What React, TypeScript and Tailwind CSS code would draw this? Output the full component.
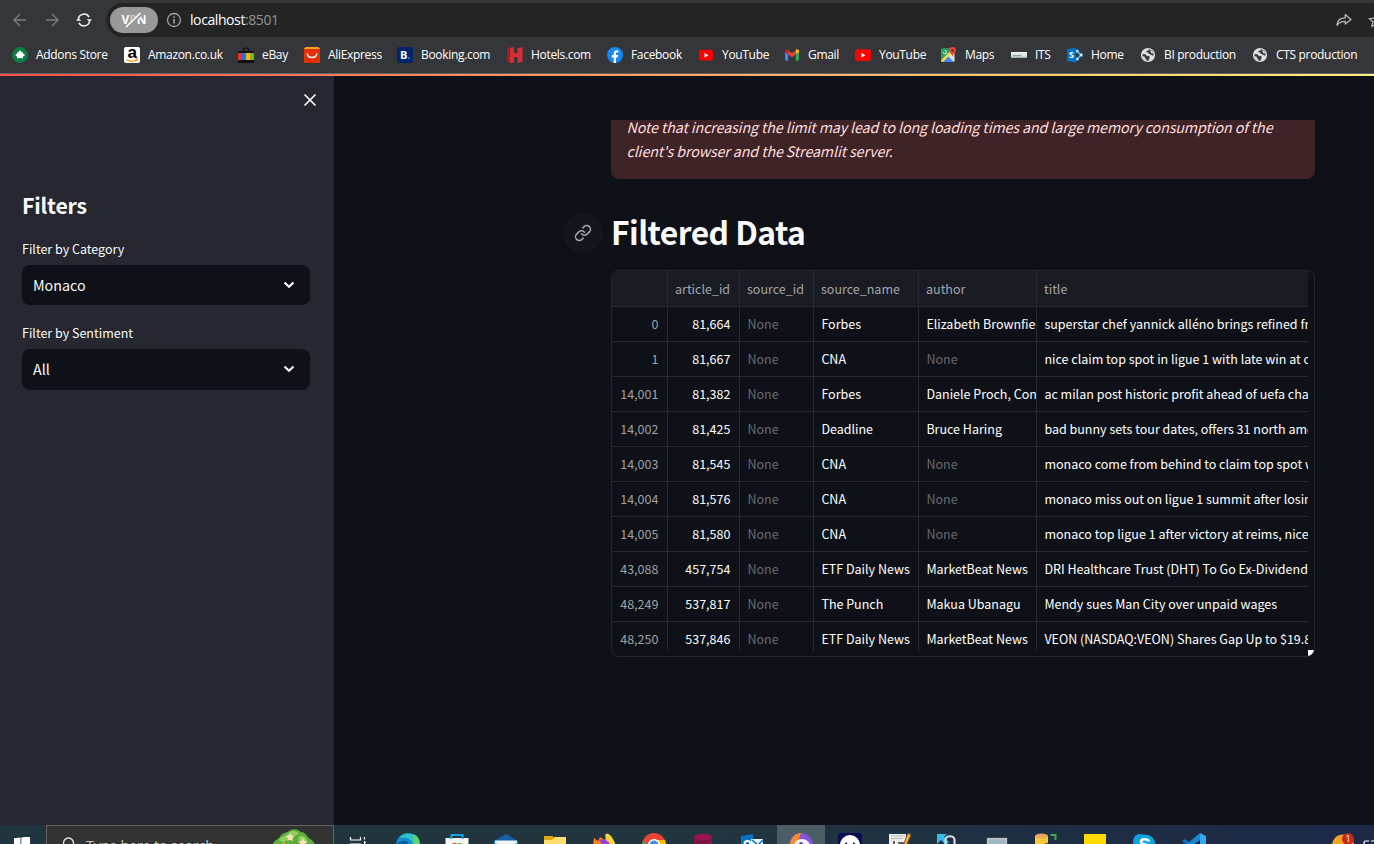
import React from "react";

const ui = "font-['Open_Sans','Noto_Sans',sans-serif]";

type Mark = { label: string; width: string; icon: React.ReactNode };

const Svg = ({ children, className = "h-4 w-4", box = "0 0 16 16" }: { children: React.ReactNode; className?: string; box?: string }) => (
  <svg viewBox={box} className={`${className} shrink-0`} fill="none">{children}</svg>
);

const Addons = () => (
  <Svg>
    <circle cx="8" cy="8" r="7.900" fill="#0b7d45" />
    <path d="M5.300 5.300h1.500a1.300 1.300 0 1 1 2.400 0h1.700v1.600a1.200 1.200 0 1 1 0 2.200v2.200H9a1.100 1.100 0 0 0-2 0H5.100V9.200a1.200 1.200 0 1 1 .2-2.300z" fill="#fff" />
  </Svg>
);
const Amazon = () => (
  <span className="relative flex h-4 w-4 shrink-0 items-center justify-center rounded-[2px] bg-white">
    <span className="-mt-[6px] font-['Liberation_Sans',sans-serif] text-[17px] font-bold leading-none text-black">a</span>
    <svg viewBox="0 0 16 16" className="absolute inset-0 h-4 w-4" fill="none"><path d="M2.500 12.400c3.400 2.500 7.400 2.300 10.600.3M11.600 12.200l2-.3-.5 1.800" stroke="#f90" strokeWidth="1.200" /></svg>
  </span>
);
const Ebay = () => (
  <Svg>
    <path d="M5.200 5V3.300C5.200 1.800 6.300 1 8 1s2.800.8 2.800 2.300V5" stroke="#111" strokeWidth="1.200" />
    <path d="M0 4h16v12H0z" fill="#15100d" />
    <path d="M0 6h4v7H0z" fill="#f02d32" /><path d="M4 6h4v7H4z" fill="#1875e5" />
    <path d="M8 6h4v7H8z" fill="#f8b60f" /><path d="M12 6h4v7h-4z" fill="#83b81a" />
  </Svg>
);
const Ali = () => (
  <Svg>
    <rect width="16" height="16" rx="2.500" fill="#f9a01b" />
    <path d="M0 2h16v11.500a2.500 2.500 0 0 1-2.500 2.500h-11A2.500 2.500 0 0 1 0 13.500z" fill="#e62e04" />
    <path d="M3.300 7c.9 4.700 8.500 4.700 9.400 0" stroke="#fff" strokeWidth="1.400" strokeLinecap="round" />
  </Svg>
);
const Booking = () => (
  <span className={`${ui} flex h-4 w-4 shrink-0 items-center justify-center rounded-[3px] bg-[#00246b] pb-px text-[11px] font-bold leading-none text-white`}>
    B<span className="text-[#22a7f0]">.</span>
  </span>
);
const Hotels = () => (
  <Svg>
    <path d="M0 1.500 4 0v5.500h4v5H4V16l-4-1.500z" fill="#9d2025" />
    <path d="M3 1 7 0v6h3.500V1.200L15.500 0v14.800L10.500 16v-6H7v5.500L3 16z" fill="#d32f35" />
  </Svg>
);
const Facebook = () => (
  <Svg>
    <circle cx="8" cy="8" r="8" fill="#1388f6" />
    <path d="M6.700 15.900v-5.500H4.800V8h1.900V6.500c0-2.300 1.200-3.300 3-3.300.7 0 1.300.1 1.600.2v2h-1c-1.100 0-1.300.6-1.300 1.400V8h2.200l-.4 2.400H9v5.500z" fill="#fff" />
  </Svg>
);
const YouTube = ({ compact = false }: { compact?: boolean }) => (
  <Svg>
    {compact ? <rect x="1" y="2.700" width="14" height="10.800" rx="2.600" fill="#f00" /> : <rect y="2.300" width="16" height="11.700" rx="2.800" fill="#f00" />}
    <path d="m6.500 6 3.900 2.200-3.900 2.300z" fill="#fff" />
  </Svg>
);
const Gmail = () => (
  <Svg>
    <path d="M1 4v8.800c0 .6.400 1 1 1h2.200V6.500z" fill="#4285f4" />
    <path d="M15 4v8.800c0 .6-.4 1-1 1h-2.200V6.500z" fill="#34a853" />
    <path d="M4.200 3.300 8 6.300l3.800-3v4L8 10.200 4.200 7.300z" fill="#ea4335" />
    <path d="M1 4c0-1.600 1.800-2.300 3-1.300l.2.200v4.400L1 5z" fill="#c5221f" />
    <path d="M15 4c0-1.600-1.800-2.300-3-1.300l-.2.200v4.400L15 5z" fill="#fbbc04" />
  </Svg>
);
const Maps = () => (
  <Svg>
    <rect x=".5" y="1.800" width="13" height="13.200" rx="1" fill="#dfe3e8" />
    <path d="M.5 1.800h11L.5 13z" fill="#1ea15b" /><path d="m1.500 15 5.700-5.700L13 15z" fill="#4285f4" />
    <path d="M.5 13 9 4.500l1.500 1.800L2 15H.5z" fill="#fdd23c" />
    <path d="M2.300 5.200a1.600 1.600 0 1 0 1.600-1.600" stroke="#fff" strokeWidth=".9" />
    <path d="M11.500 0a3.300 3.300 0 0 0-3.300 3.500c0 2.500 3 3.500 3.300 6.500.3-3 3.300-4 3.300-6.500A3.300 3.300 0 0 0 11.500 0Z" fill="#e8453c" />
    <circle cx="11.500" cy="3.500" r="1.200" fill="#7c1d19" />
  </Svg>
);
const Its = () => (
  <Svg>
    <path d="M0 5h16v6H0z" fill="#dde5e5" />
    <path d="M0 9.700h16V11H0z" fill="#9fb3b5" /><path d="M2 8.700h9" stroke="#6b8990" strokeWidth="1.200" strokeDasharray="1.500 .7" />
    <path d="M0 5.500h16" stroke="#f5f7f7" />
  </Svg>
);
const SharePoint = () => (
  <span className="relative flex h-4 w-4 shrink-0">
    <Svg>
      <path d="m9.500 3.800 4.700 4.300-4.700 4.200" stroke="#dcebf7" strokeWidth="1.200" />
      <g fill="#dcebf7" stroke="#0072c6" strokeWidth=".7"><circle cx="10.300" cy="4.200" r="1.700" /><circle cx="14" cy="8" r="1.900" /><circle cx="10.300" cy="12" r="1.700" /></g>
      <path d="M0 2 9 .5v15.200L0 14z" fill="#0072c6" />
    </Svg>
    <span className={`${ui} absolute left-[2px] top-[3px] text-[9px] font-bold leading-[10px] text-white`}>S</span>
  </span>
);
const Globe = () => (
  <Svg>
    <circle cx="8" cy="8" r="7.100" fill="#dedfe1" />
    <path d="M2.400 7.200h2.700c1 0 1.300 1.800 2.500 1.800 1.600 0 2.600.6 1.900 2.200-.5 1-.9 1.300-1 2.500-3.400.2-6.200-2.500-6.100-6.500z" fill="#393a3e" />
    <path d="M8.600 2.300c.6 1-.7 1.500-1.600 1.700-1.200.3-.7 1.400.4 1.500 1.500.1 1 1.700 2.400 1.700 1.100 0 1.500.8 2.400 1.200.6.300 1.200 0 1.400-.5.200-3-2-5.500-5-5.600z" fill="#393a3e" />
    <path d="M2.600 9.300c1.500 0 2 .2 2.300 1.300.4 1.500 1.300 1.200 1.800 3.100-2-.3-3.800-2.200-4.100-4.400zM10.300 2.900c1.600.7 2.800 2 3.200 3.600-1.500.3-2.300-.1-2.600-1.200-.3-.9-1-1.300-.6-2.400z" fill="#dedfe1" />
  </Svg>
);

const marks: Mark[] = [
  { label: "Addons Store", width: "w-[112px]", icon: <Addons /> },
  { label: "Amazon.co.uk", width: "w-[114px]", icon: <Amazon /> },
  { label: "eBay", width: "w-[66px]", icon: <Ebay /> },
  { label: "AliExpress", width: "w-[93px]", icon: <Ali /> },
  { label: "Booking.com", width: "w-[110px]", icon: <Booking /> },
  { label: "Hotels.com", width: "w-[100px]", icon: <Hotels /> },
  { label: "Facebook", width: "w-[91px]", icon: <Facebook /> },
  { label: "YouTube", width: "w-[86px]", icon: <YouTube compact /> },
  { label: "Gmail", width: "w-[71px]", icon: <Gmail /> },
  { label: "YouTube", width: "w-[86px]", icon: <YouTube /> },
  { label: "Maps", width: "w-[70px]", icon: <Maps /> },
  { label: "ITS", width: "w-[56px]", icon: <Its /> },
  { label: "Home", width: "w-[73px]", icon: <SharePoint /> },
  { label: "BI production", width: "w-[112px]", icon: <Globe /> },
  { label: "CTS production", width: "w-[114px]", icon: <Globe /> },
];

const Browser = () => (
  <header className={`${ui} flex h-[76px] shrink-0 flex-col bg-[#35363a]`}>
    <div className="flex h-[37px] pt-[3px]">
      <div className="flex w-[106px] items-center gap-4 pl-3">
        <Svg><path d="M14 8H2M8 2 2 8l6 6" stroke="#7b7c7f" strokeWidth="1.400" /></Svg>
        <Svg><path d="M2 8h12M8 2l6 6-6 6" stroke="#7b7c7f" strokeWidth="1.400" /></Svg>
        <Svg>
          <path d="M2.300 7a5.800 5.800 0 0 1 10.800-1.900M13.700 9A5.800 5.800 0 0 1 2.900 10.900" stroke="#f1f1f1" strokeWidth="1.500" />
          <path d="M10.600 7.300h5.400L13.500 10zM0 8.700h5.400L2.500 6z" fill="#f1f1f1" />
        </Svg>
      </div>
      <div className="flex flex-1 items-center overflow-hidden rounded-l-[17px] bg-[#242424] pl-1">
        <span className="relative flex h-[26px] w-12 items-center justify-center rounded-full bg-[#999] text-[12px] font-bold text-white">
          V<span className="text-[#c4c4c4]">P</span>N
          <svg viewBox="0 0 48 26" className="absolute inset-0 h-[26px] w-12" fill="none"><path d="M17.300 20.300 31.300 6.800" stroke="#999" strokeWidth="3.400" /><path d="M16 20 30.500 6" stroke="#fff" strokeWidth="1.700" /></svg>
        </span>
        <Svg className="ml-2 h-4 w-4"><circle cx="8" cy="8" r="6.500" stroke="#a0a1a3" strokeWidth="1.300" /><path d="M8 7v4.500M8 4.300v1.500" stroke="#a0a1a3" strokeWidth="1.600" /></Svg>
        <span className="ml-2 text-[14px] leading-5 tracking-[-0.41px] text-white">localhost<span className="text-[#939393]">:8501</span></span>
        <Svg className="ml-auto h-4 w-4"><path d="M1 13.300C1.200 8.800 4 5.900 9.300 5.800V2.500L15 7.400l-5.700 4.700V9.300C5.600 9.200 3 10.500 1 13.300Z" stroke="#b8b8b8" strokeWidth="1.300" strokeLinejoin="round" /></Svg>
        <Svg className="-mr-[10px] ml-4 h-4 w-4"><path d="m8 2 1.900 4.200 4.600.5-3.400 3.100.9 4.500L8 12l-4 2.300.9-4.500-3.400-3.100 4.600-.5z" stroke="#b8b8b8" strokeWidth="1.300" /></Svg>
      </div>
    </div>
    <nav className="flex h-9 items-center overflow-hidden pl-3">
      {marks.map((m, i) => (
        <a key={i} className={`flex shrink-0 items-center gap-2 whitespace-nowrap text-[12px] leading-4 tracking-[-0.32px] text-white ${m.width}`}>
          {m.icon}<span>{m.label}</span>
        </a>
      ))}
    </nav>
    <div className="h-px bg-[#626367]" />
    <div className="h-[2px] bg-linear-to-r from-[#ff4b4b] to-[#fffd80] to-[110%]" />
  </header>
);

const Select = ({ label, value, box }: { label: string; value: string; box: string }) => (
  <div>
    <div className="mb-[6px] h-[20px] text-[12.500px] leading-[20px] text-[#fafafa]">{label}</div>
    <div className={`flex items-start justify-between rounded-lg bg-[#0e1117] pl-[11px] pr-[13px] pt-[8px] text-[14.300px] leading-6 text-[#fafafa] ${box}`}>
      {value}
      <svg viewBox="0 0 16 16" className="mt-[4px] h-4 w-4" fill="none"><path d="m3.500 5.500 4.500 4.300 4.500-4.300" stroke="#fafafa" strokeWidth="2.100" /></svg>
    </div>
  </div>
);

const rows: [string, string, string, string | null, string][] = [
  ["0", "81,664", "Forbes", "Elizabeth Brownfiel", "superstar chef yannick alléno brings refined fre"],
  ["1", "81,667", "CNA", null, "nice claim top spot in ligue 1 with late win at cl"],
  ["14,001", "81,382", "Forbes", "Daniele Proch, Cont", "ac milan post historic profit ahead of uefa cham"],
  ["14,002", "81,425", "Deadline", "Bruce Haring", "bad bunny sets tour dates, offers 31 north ame"],
  ["14,003", "81,545", "CNA", null, "monaco come from behind to claim top spot wi"],
  ["14,004", "81,576", "CNA", null, "monaco miss out on ligue 1 summit after losing"],
  ["14,005", "81,580", "CNA", null, "monaco top ligue 1 after victory at reims, nice"],
  ["43,088", "457,754", "ETF Daily News", "MarketBeat News", "DRI Healthcare Trust (DHT) To Go Ex-Dividend"],
  ["48,249", "537,817", "The Punch", "Makua Ubanagu", "Mendy sues Man City over unpaid wages"],
  ["48,250", "537,846", "ETF Daily News", "MarketBeat News", "VEON (NASDAQ:VEON) Shares Gap Up to $19.88"],
];

const cols = "grid grid-cols-[56px_72px_74px_105px_118px_272px]";
const cell = "overflow-hidden whitespace-nowrap border-r border-b border-[#272a31]";

const Table = () => (
  <div className="relative h-[387px] w-[704px] overflow-hidden rounded-lg border border-[#24272e] text-[12.500px]">
    <div className="h-[380px] w-[696px] overflow-hidden">
      <div className={`${cols} h-[36px] bg-[#1a1c24] leading-[36px] text-[#a3a5aa]`}>
        {["", "article_id", "source_id", "source_name", "author", "title"].map((h) => <div key={h} className={`${cell} px-[7px]`}>{h}</div>)}
      </div>
      {rows.map((r) => (
        <div key={r[0]} className={`${cols} h-[35px] leading-[34px] text-white`}>
          <div className={`${cell} pr-[8.600px] text-right text-[#9fa1a6]`}>{r[0]}</div>
          <div className={`${cell} pr-[8.600px] text-right`}>{r[1]}</div>
          <div className={`${cell} pl-[7.400px] text-[#686a70]`}>None</div>
          <div className={`${cell} pl-[7.400px]`}>{r[2]}</div>
          <div className={`${cell} pl-[7.400px] ${r[3] ? "" : "text-[#686a70]"}`}>{r[3] ?? "None"}</div>
          <div className={`${cell} pl-[7.400px]`}>{r[4]}</div>
        </div>
      ))}
    </div>
    <svg viewBox="0 0 6 6" className="absolute bottom-0 right-0 h-[6px] w-[6px]"><path d="M0 0h6c0 4-2 6-6 6z" fill="#fff" /></svg>
  </div>
);

const Tile = ({ children, active = false }: { children?: React.ReactNode; active?: boolean }) => (
  <div className={`flex h-full w-12 shrink-0 justify-center pt-2 ${active ? "bg-[#4c5d65]" : ""}`}>
    <svg viewBox="0 0 24 24" className="h-6 w-6 shrink-0" fill="none">{children}</svg>
  </div>
);

const Taskbar = () => (
  <footer className="flex h-[19px] shrink-0 overflow-hidden bg-linear-to-r from-[#20353e] via-[#22353f] to-[#1c2846]">
    <div className="flex w-[46px] shrink-0 justify-center pt-3">
      <svg viewBox="0 0 16 16" className="mr-[2px] h-4 w-4 shrink-0" fill="#fff"><path d="M0 1.200 6.500.5v7H0zM7.300.4 16-.5v8H7.300zM0 8.500h6.500V15L0 14zM7.300 8.500H16V16l-8.700-1z" /></svg>
    </div>
    <div className={`${ui} flex h-10 w-[288px] shrink-0 border border-[#626262] bg-[#333] pl-4 text-[#c8c8c8]`}>
      <svg viewBox="0 0 16 16" className="mt-[11px] h-4 w-4" fill="none"><circle cx="5.500" cy="6" r="5" stroke="#e8e8e8" strokeWidth="1.300" /><path d="m3 10-3 4" stroke="#e8e8e8" /></svg>
      <span className="ml-[7px] mt-[9px] whitespace-nowrap text-[14.500px] leading-[22px] tracking-[-0.300px]">Type here to search</span>
      <svg viewBox="0 0 46 36" className="ml-auto mr-[16px] mt-[2px] h-9 w-[46px] shrink-0" fill="none">
        <path d="M1 18C2 13 6 12 9 9c2-5 7-4 9-6 4-3 9-2 12 1 5 0 6 5 9 7 3 1 5 5 6 8z" fill="#5fae3d" />
        <path d="M8 12c3-5 8-3 10-7 4-4 9-1 10 1-5 1-6 5-11 5-3 3-6 4-9 1zM27 10c4-4 8-1 9 3-3 2-7 2-9-3z" fill="#94cf5c" />
        <path d="m19 5 1.400 2.600 2.900.3-2 2.100.6 3-3-1.300-2.700 1.300.6-3-2.300-2.200 3.100-.3zM32 10l1.400 3 3.300.3-2.300 2.500.6 3.200h-6l.5-3.200-2.500-2.500 3.500-.3z" fill="#fbe0be" />
        <path d="m3 17 3-2 2 3zM13 13l3 5h-6z" fill="#e0aa3b" />
      </svg>
    </div>
    <div className="ml-[1px] flex gap-[1.100px]">
      <Tile><path d="M3.500 4v3.500M3.500 7h10M13.500 4v3.500M3.500 15v-4h10v4M17.500 4v2.500M17.500 8v10M17 9.500h2" stroke="#fff" strokeWidth="1.200" /></Tile>
      <Tile><circle cx="12" cy="12" r="12" fill="#178bcf" /><path d="M3 5C9-3 23 0 24 11c-4 3-8 1-8-2-2-4-8-5-13-4z" fill="#2fbfc7" /><path d="M17 1c6 2 8 8 6 14l-5-5z" fill="#5bd56b" /><path d="M0 12c4-6 14-5 12 0z" fill="#0c5ea7" /></Tile>
      <Tile><path d="M.5 5h23v17H.5z" fill="#f5f5f5" /><path d="M6.500 6V2h11v4" stroke="#13a5e9" strokeWidth="2" /><path d="M7.500 10h4v4h-4z" fill="#ee5230" /><path d="M12.500 10h4v4h-4z" fill="#76b82a" /></Tile>
      <Tile><path d="M0 8 12 1l12 7v13H0z" fill="#1761a9" /><path d="M1 7.500h22V16H1z" fill="#eef5f9" /><path d="m0 9 12 7 12-7v13H0z" fill="#37a9df" /></Tile>
      <Tile><path d="M1 3h9v6H1z" fill="#e2a610" /><path d="M1 7h8l2-3h12v16H1z" fill="#ffdc6b" /></Tile>
      <Tile><path d="M1 12 2 5l4 3 2-4 5 3 2-7 8 10v14H1z" fill="#ff7a1b" /><path d="M13 2c4-5 10 6 11 12h-8z" fill="#ffd23f" /><path d="M7 7c7-2 13 3 12 9l-8-4z" fill="#9340da" /></Tile>
      <Tile><circle cx="12" cy="12" r="12" fill="#ea4335" /><path d="M1 8c-3 8 3 16 11 16L7 12z" fill="#34a853" /><path d="M13 7h10c3 8-1 15-11 17z" fill="#fbbc04" /><circle cx="12" cy="12" r="6" fill="#fff" /><circle cx="12" cy="12" r="4.500" fill="#4285f4" /></Tile>
      <Tile><path d="M3 4v18h18V4z" fill="#8b1247" /><ellipse cx="12" cy="4" rx="9" ry="3.200" fill="#98164f" /><path d="M3 6c2 4 16 4 18 0" stroke="#5e1534" /></Tile>
      <Tile><path d="M1 3 13 1v22L1 21z" fill="#0672c6" /><path d="M11 6h12v13H11z" fill="#e9f3fa" /><path d="m12 7 6 5 5-5" stroke="#0672c6" strokeWidth="1.500" /><circle cx="7.500" cy="11" r="3" stroke="#fff" strokeWidth="2" /></Tile>
      <Tile active><circle cx="12" cy="12" r="12" fill="#8456df" /><path d="M12 0C2 0-2 14 3 20l6-12z" fill="#fb8b22" /><path d="M5 12c2-8 14-8 16 0v8H6z" fill="#f6f2ff" /><circle cx="12" cy="11" r="2" fill="#5f4b8b" /></Tile>
      <Tile><rect width="24" height="24" rx="3" fill="#090b55" /><circle cx="12" cy="12" r="10" fill="#fff" /><path d="m5 12 4-3v2h6V9l4 3-4 3v-2H9v2z" fill="#111752" /></Tile>
      <Tile><path d="M2 1h17v22H2z" fill="#eee" /><path d="M4 3h14M4 5.500h12" stroke="#b5b5b5" /><path d="M7 8v9M11 11v6M11 10h5v7" stroke="#333" strokeWidth="1.500" /><path d="m21 0 3 2-6 13-3 2 1-4z" fill="#eeb62c" stroke="#80502b" /></Tile>
      <Tile><path d="M1 1h10L8 4l5 5-3 3-5-5-4 4z" fill="#36bce9" /><path d="M9 11h11v13H9z" fill="#cfd4d7" /><path d="M9.500 12V7c0-5 9-5 9 0v5" stroke="#d4dadd" strokeWidth="2.200" /></Tile>
      <Tile><path d="M1 4h22v16H1z" fill="#3c4347" /><path d="M2 5h20v13H2z" fill="#b9c5cb" /><path d="M3.500 6.500h17v9h-17z" fill="#9eb7c4" /></Tile>
      <Tile><path d="M1 3v18h13V3z" fill="#f8c936" /><ellipse cx="7.500" cy="3" rx="6.500" ry="2.500" fill="#eaa45c" /><path d="M16.500 2h5v5" stroke="#42a548" strokeWidth="2" /><path d="M11 11h3" stroke="#4c4c30" strokeWidth="2" /></Tile>
      <Tile><path d="M1 1h22v20H1z" fill="#ffd900" /></Tile>
      <Tile><circle cx="7" cy="8" r="7" fill="#129ed9" /><circle cx="12" cy="12" r="10.500" fill="#08a7e2" /><path d="M16 8.500c-1-3-8-3-8 0 0 4 8 2 8 6 0 4-8 4-9 0" stroke="#fff" strokeWidth="2.500" /></Tile>
      <Tile><path d="m0 8 3-2 15 12v5z" fill="#0872bd" /><path d="M0 15 18 0v7L3 18z" fill="#1786ce" /><path d="m18 0 6 3v18l-6 3z" fill="#37a8ef" /></Tile>
    </div>
    <div className="relative ml-auto flex w-[43px] shrink-0 pt-2">
      <svg viewBox="0 0 24 24" className="h-6 w-6 shrink-0" fill="none"><circle cx="12" cy="12.500" r="11" fill="#f2a322" /></svg>
      <span className={`${ui} absolute left-[11px] top-[8px] h-3 w-3 rounded-full bg-[#c42b1c] text-center text-[9px] leading-[12px] text-white`}>1</span>
      <svg viewBox="0 0 16 16" className="mt-[6px] ml-[8px] h-4 w-4 shrink-0" fill="none"><path d="M1 14V4q0-2 2-2h3M8 2h5" stroke="#fff" strokeWidth="1.200" /></svg>
    </div>
  </footer>
);

export default function App() {
  return (
    <div className="flex h-[844px] w-[1374px] flex-col overflow-hidden bg-[#0e1117] font-['Noto_Sans_CJK_SC',sans-serif]">
      <Browser />
      <div className="flex min-h-0 flex-1">
        <aside className="flex w-[334px] shrink-0 flex-col bg-[#262730] pl-[22px] pr-6">
          <div className="flex h-[48px] items-center justify-end">
            <svg viewBox="0 0 16 16" className="-mr-2 h-4 w-4" fill="none"><path d="m2.500 2.500 11 11m0-11-11 11" stroke="#fafafa" strokeWidth="1.700" /></svg>
          </div>
          <h2 className="mt-[63px] h-[36px] text-[21.300px] font-bold leading-[36px] tracking-[-0.200px] text-[#fafafa]">Filters</h2>
          <div className="mt-[16px] flex flex-col gap-[18px]">
            <Select label="Filter by Category" value="Monaco" box="h-[40px]" />
            <Select label="Filter by Sentiment" value="All" box="h-[41px]" />
          </div>
        </aside>
        <main className="flex flex-1 flex-col pl-[277px] pt-[44px]">
          <div className="h-[59px] w-[704px] overflow-hidden rounded-b-lg bg-[#3e2327] pl-[15.500px] text-[14.300px] italic leading-6 tracking-[-0.128px] text-[#ffdede]">
            <p className="-mt-[5px] whitespace-nowrap">Note that increasing the limit may lead to long loading times and large memory consumption of the<br />client's browser and the Streamlit server.</p>
          </div>
          <div className="-ml-12 mt-[34px] flex h-10 items-center gap-[9px]">
            <span className="flex h-10 w-10 items-center justify-center rounded-full bg-[#13161d]">
              <svg viewBox="0 0 24 24" className="h-[18px] w-[18px]" fill="none" stroke="#a3a4a8" strokeWidth="2" strokeLinecap="round" strokeLinejoin="round"><path d="M10 13a5 5 0 0 0 7.540.540l3-3a5 5 0 0 0-7.070-7.070l-1.720 1.710" /><path d="M14 11a5 5 0 0 0-7.540-.540l-3 3a5 5 0 0 0 7.070 7.070l1.710-1.710" /></svg>
            </span>
            <h1 className="-ml-px -mt-1 text-[31.800px] font-bold leading-10 tracking-[-0.560px] text-[#fafafa]">Filtered Data</h1>
          </div>
          <div className="mt-[17px]"><Table /></div>
        </main>
      </div>
      <Taskbar />
    </div>
  );
}
